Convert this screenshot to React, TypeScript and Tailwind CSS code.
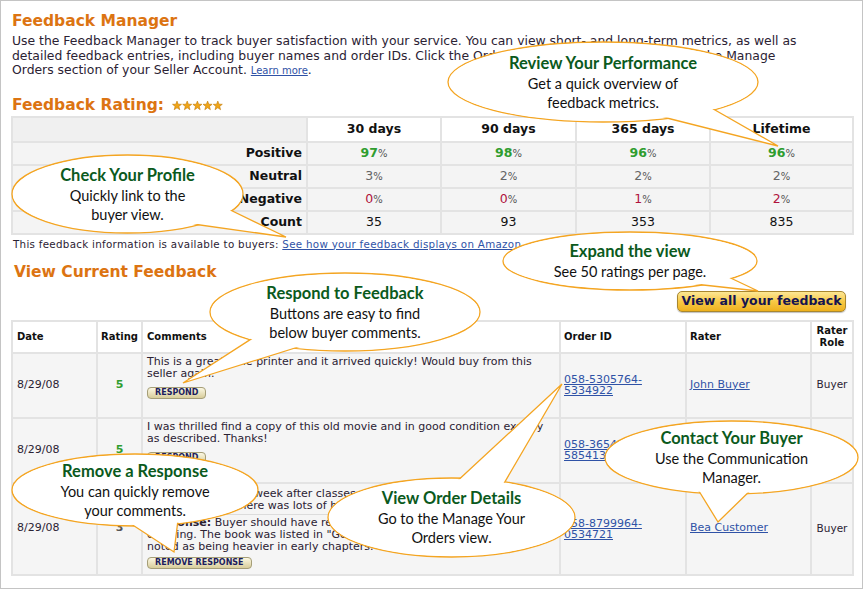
type Pt = [number, number];

interface Callout {
  cx: number;
  cy: number;
  rx: number;
  ry: number;
  tail: [Pt, Pt, Pt];
  title: string;
  lines: string[];
}

const callouts: Callout[] = [
  {
    cx: 603, cy: 82, rx: 155, ry: 40,
    tail: [[647, 113], [778, 146], [701, 102]],
    title: "Review Your Performance",
    lines: ["Get a quick overview of", "feedback metrics."],
  },
  {
    cx: 127.5, cy: 194, rx: 115.5, ry: 39,
    tail: [[218, 204], [286, 237], [186, 223]],
    title: "Check Your Profile",
    lines: ["Quickly link to the", "buyer view."],
  },
  {
    cx: 630, cy: 261, rx: 127, ry: 29,
    tail: [[720, 273], [758, 291], [685, 283]],
    title: "Expand the view",
    lines: ["See 50 ratings per page."],
  },
  {
    cx: 345, cy: 312, rx: 135, ry: 39,
    tail: [[262, 332], [183, 383], [311, 343]],
    title: "Respond to Feedback",
    lines: ["Buttons are easy to find", "below buyer comments."],
  },
  {
    cx: 731.5, cy: 457.5, rx: 126.5, ry: 36.5,
    tail: [[694, 483], [718, 522], [758, 483]],
    title: "Contact Your Buyer",
    lines: ["Use the Communication", "Manager."],
  },
  {
    cx: 135, cy: 490, rx: 123, ry: 36,
    tail: [[125, 520], [174, 552], [179, 512]],
    title: "Remove a Response",
    lines: ["You can quickly remove", "your comments."],
  },
  {
    cx: 451.5, cy: 517.5, rx: 123.5, ry: 39.5,
    tail: [[453, 485], [562, 384], [499, 492]],
    title: "View Order Details",
    lines: ["Go to the Manage Your", "Orders view."],
  },
];

function CalloutBubble({ c }: { c: Callout }) {
  const [a, tip, b] = c.tail;
  return (
    <>
      <svg className="absolute left-0 top-0 pointer-events-none" width={863} height={589}>
        <ellipse cx={c.cx} cy={c.cy} rx={c.rx} ry={c.ry} fill="#fff" stroke="#f4a522" strokeWidth={1.3} />
        <path d={`M${a[0]} ${a[1]} L${tip[0]} ${tip[1]} L${b[0]} ${b[1]}`} fill="#fff" stroke="#f4a522" strokeWidth={1.3} strokeLinejoin="miter" />
        <ellipse cx={c.cx} cy={c.cy} rx={c.rx - 1} ry={c.ry - 1} fill="#fff" />
      </svg>
      <div
        className="absolute flex flex-col items-center justify-center text-center font-['Lato',sans-serif] text-[14.5px] leading-[19px] text-[#111]"
        style={{ left: c.cx - c.rx, top: c.cy - c.ry, width: c.rx * 2, height: c.ry * 2 }}
      >
        <div className="text-[16.5px] leading-[21px] font-bold text-[#0b5a1d]">{c.title}</div>
        {c.lines.map((l) => (
          <div key={l}>{l}</div>
        ))}
      </div>
    </>
  );
}

function Stars() {
  const star = "M5 0.6 L6.2 3.7 L9.5 3.8 L6.9 5.9 L7.8 9.2 L5 7.3 L2.2 9.2 L3.1 5.9 L0.5 3.8 L3.8 3.7 Z";
  return (
    <svg width="52" height="11" className="ml-[8px] mt-[1px]">
      {[0, 1, 2, 3, 4].map((i) => (
        <path key={i} d={star} transform={`translate(${i * 10.2} 0.5)`} fill="#f0a516" stroke="#c27a08" strokeWidth={0.6} />
      ))}
    </svg>
  );
}

function Pct({ v, color, bold }: { v: number; color: string; bold?: boolean }) {
  return (
    <span>
      <span className={bold ? "font-bold " + color : color}>{v}</span>
      <span className="text-[10px] text-[#555]">%</span>
    </span>
  );
}

function SmallButton({ children }: { children: string }) {
  return (
    <span className="inline-flex h-[12px] items-center rounded-[4px] border border-[#a59e78] bg-gradient-to-b from-[#fcf8e3] to-[#d8cd9b] px-[7px] text-[8px] font-bold leading-none text-[#1d1d5e]">
      {children}
    </span>
  );
}

const ratingRows = [
  { label: "Positive", vals: [97, 98, 96, 96], kind: "pos" },
  { label: "Neutral", vals: [3, 2, 2, 2], kind: "neu" },
  { label: "Negative", vals: [0, 0, 1, 2], kind: "neg" },
];

export default function App() {
  const cell = "border-2 border-[#e3e3e3]";
  const link = "text-[#2f52a6] underline";
  return (
    <div className="relative w-[863px] h-[589px] overflow-hidden bg-white border border-[#c4c4c4] font-['DejaVu_Sans',Verdana,sans-serif] text-[#2a2a2a]">
      <div className="px-[10px] pt-[9px]">
        <h1 className="pl-[1px] text-[15.5px] leading-[22px] font-bold text-[#dc7412]">Feedback Manager</h1>
        <p className="mt-[2px] pl-[1px] whitespace-nowrap text-[12.4px] leading-[14.5px] text-[#2b2233]">
          Use the Feedback Manager to track buyer satisfaction with your service. You can view short- and long-term metrics, as well as
          <br />
          detailed feedback entries, including buyer names and order IDs. Click the Order ID to view order details within the Manage
          <br />
          Orders section of your Seller Account. <a className={link + " text-[10px]"}>Learn more</a>.
        </p>

        <div className="mt-[15px] flex items-center pl-[1px]">
          <h2 className="text-[15.5px] leading-[22px] font-bold text-[#dc7412]">Feedback Rating:</h2>
          <Stars />
        </div>

        <table className="w-[841px] table-fixed border-collapse text-[12.5px] text-[#111]">
          <colgroup>
            <col className="w-[295px]" />
            <col className="w-[134px]" />
            <col className="w-[135px]" />
            <col className="w-[134px]" />
            <col className="w-[143px]" />
          </colgroup>
          <thead>
            <tr className="h-[25px]">
              <th className={cell + " bg-[#f0f0f0]"}></th>
              {["30 days", "90 days", "365 days", "Lifetime"].map((h) => (
                <th key={h} className={cell + " bg-white font-bold"}>{h}</th>
              ))}
            </tr>
          </thead>
          <tbody className="bg-[#f4f4f4]">
            {ratingRows.map((r) => (
              <tr key={r.label} className="h-[23px]">
                <td className={cell + " pr-[4px] text-right font-bold"}>{r.label}</td>
                {r.vals.map((v, i) => (
                  <td key={i} className={cell + " text-center"}>
                    {r.kind === "pos" && <Pct v={v} color="text-[#2f9d2f]" bold />}
                    {r.kind === "neu" && <Pct v={v} color="text-[#666]" />}
                    {r.kind === "neg" && <Pct v={v} color="text-[#b0123c]" />}
                  </td>
                ))}
              </tr>
            ))}
            <tr className="h-[23px]">
              <td className={cell + " pr-[4px] text-right font-bold"}>Count</td>
              {[35, 93, 353, 835].map((v) => (
                <td key={v} className={cell + " text-center"}>{v}</td>
              ))}
            </tr>
          </tbody>
        </table>

        <p className="mt-[3px] pl-[2px] whitespace-nowrap text-[10.3px] leading-[12px] tracking-[0.3px] text-[#2b2233]">
          This feedback information is available to buyers:{" "}
          <a className={link}>See how your feedback displays on Amazon</a>.
        </p>

        <h2 className="mt-[11px] pl-[3px] text-[15.5px] leading-[22px] font-bold text-[#dc7412]">View Current Feedback</h2>

        <div className="mt-[8px] flex justify-end pr-[6px]">
          <button className="h-[21px] w-[169px] rounded-[5px] border border-[#a9872f] bg-gradient-to-b from-[#fde793] via-[#f7c944] to-[#eeb11c] text-[12.5px] font-bold text-[#141450] shadow-[0_1px_1px_rgba(0,0,0,0.25)]">
            View all your feedback
          </button>
        </div>

        <table className="mt-[8px] w-[841px] table-fixed border-collapse text-[11px] text-[#2b2233]">
          <colgroup>
            <col className="w-[85px]" />
            <col className="w-[45px]" />
            <col className="w-[418px]" />
            <col className="w-[126px]" />
            <col className="w-[125px]" />
            <col className="w-[42px]" />
          </colgroup>
          <thead>
            <tr className="h-[32px] bg-white text-left text-[10px] font-bold text-[#111]">
              <th className={cell + " pl-[4px]"}>Date</th>
              <th className={cell + " pl-[3px]"}>Rating</th>
              <th className={cell + " pl-[4px]"}>Comments</th>
              <th className={cell + " pl-[3px]"}>Order ID</th>
              <th className={cell + " pl-[3px]"}>Rater</th>
              <th className={cell + " text-center leading-[12px]"}>Rater<br />Role</th>
            </tr>
          </thead>
          <tbody className="bg-[#f5f5f5]">
            <tr className="h-[65px]">
              <td className={cell + " pl-[4px]"}>8/29/08</td>
              <td className={cell + " text-center font-bold text-[#2f9d2f]"}>5</td>
              <td className={cell + " px-[4px] pt-[2px] align-top leading-[12px] whitespace-nowrap"}>
                This is a great little printer and it arrived quickly! Would buy from this
                <br />
                seller again.
                <div className="mt-[6px]"><SmallButton>RESPOND</SmallButton></div>
              </td>
              <td className={cell + " pl-[3px] leading-[11px]"}>
                <a className={link}>058-5305764-<br />5334922</a>
              </td>
              <td className={cell + " pl-[3px]"}>
                <a className={link}>John Buyer</a>
              </td>
              <td className={cell + " text-center text-[10.5px]"}>Buyer</td>
            </tr>
            <tr className="h-[65px]">
              <td className={cell + " pl-[4px]"}>8/29/08</td>
              <td className={cell + " text-center font-bold text-[#2f9d2f]"}>5</td>
              <td className={cell + " px-[4px] pt-[2px] align-top leading-[12px] whitespace-nowrap"}>
                I was thrilled find a copy of this old movie and in good condition exactly
                <br />
                as described. Thanks!
                <div className="mt-[6px]"><SmallButton>RESPOND</SmallButton></div>
              </td>
              <td className={cell + " pl-[3px] leading-[11px]"}>
                <a className={link}>058-3654218-<br />5854132</a>
              </td>
              <td className={cell + " pl-[3px]"}>
                <a className={link}>Jane Shopper</a>
              </td>
              <td className={cell + " text-center text-[10.5px]"}>Buyer</td>
            </tr>
            <tr className="h-[92px]">
              <td className={cell + " pl-[4px]"}>8/29/08</td>
              <td className={cell + " text-center font-bold text-[#555]"}>3</td>
              <td className={cell + " px-[4px] pt-[4px] align-top leading-[12px] whitespace-nowrap"}>
                The book arrived a week after classes started and it had
                <br />
                Not happy, and there was lots of highlighting throughout.
                <div className="mt-[2px] border-t border-[#dcdcdc] pt-[2px]">
                  <span className="font-bold">Response:</span> Buyer should have read the description before
                  <br />
                  ordering. The book was listed in "Good" condition, with highlighting
                  <br />
                  noted as being heavier in early chapters.
                  <div className="mt-[3px]"><SmallButton>REMOVE RESPONSE</SmallButton></div>
                </div>
              </td>
              <td className={cell + " pl-[3px] leading-[11px]"}>
                <a className={link}>058-8799964-<br />0534721</a>
              </td>
              <td className={cell + " pl-[3px]"}>
                <a className={link}>Bea Customer</a>
              </td>
              <td className={cell + " text-center text-[10.5px]"}>Buyer</td>
            </tr>
          </tbody>
        </table>
      </div>

      <div className="absolute -left-px -top-px h-[589px] w-[863px]">
        {callouts.map((c) => (
          <CalloutBubble key={c.title} c={c} />
        ))}
      </div>
    </div>
  );
}
